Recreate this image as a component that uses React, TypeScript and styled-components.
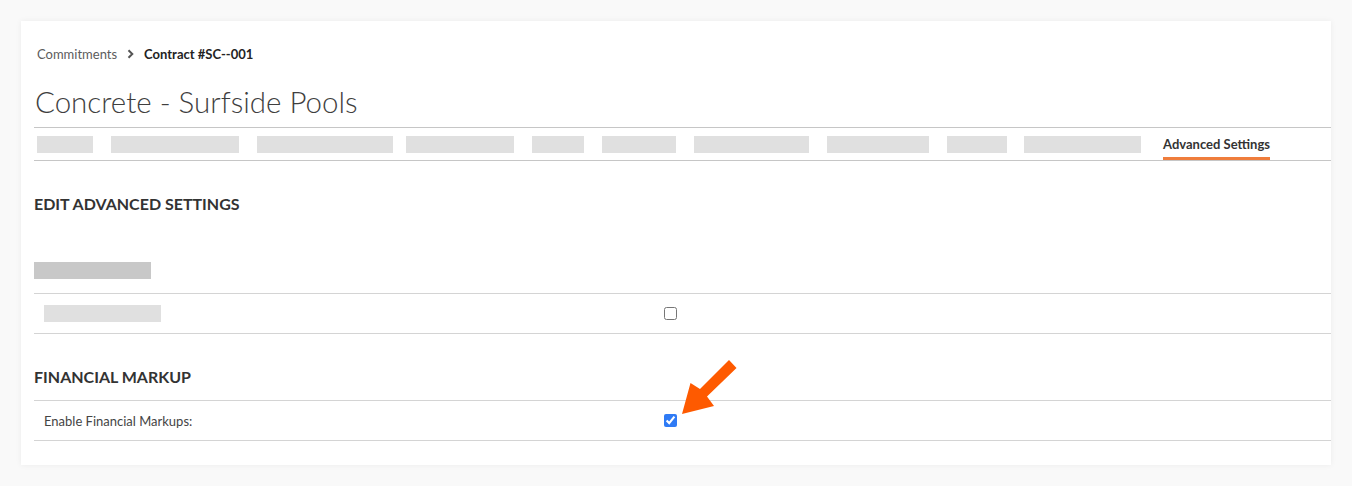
import React from 'react';
import styled, { createGlobalStyle } from 'styled-components';

const GlobalStyle = createGlobalStyle`
    html, body {
        margin: 0;
        padding: 0;
        background: #f9f9f9;
        font-family: Lato, "Open Sans", "Liberation Sans", sans-serif;
    }
    * { box-sizing: border-box; }
`;

const Page = styled.div`
    padding: 21px 21px 21px 21px;
`;

const Card = styled.div`
    position: relative;
    background: #fff;
    box-shadow: 0 0 6px rgba(0, 0, 0, 0.06);
    padding: 23px 0 24px 13px;
`;

const Breadcrumb = styled.div`
    display: flex;
    align-items: center;
    height: 20px;
    padding-left: 3px;
    font-size: 13px;
`;

const Crumb = styled.span<{ current?: boolean }>`
    color: ${(p) => (p.current ? '#232323' : '#5c5c5c')};
    font-weight: ${(p) => (p.current ? 700 : 400)};
`;

const Chevron = styled.svg`
    margin: 0 10px 0 10px;
`;

const Title = styled.h1`
    margin: 18px 0 0 1px;
    height: 40px;
    line-height: 40px;
    font-size: 29.5px;
    font-weight: 300;
    color: #3f3f3f;
`;

const Tabs = styled.nav`
    display: flex;
    align-items: center;
    height: 34px;
    margin-top: 5px;
    padding-left: 3px;
    border-top: 1px solid #c6c6c6;
    border-bottom: 1px solid #c6c6c6;
`;

const TabBlock = styled.div<{ w: number; gap: number }>`
    width: ${(p) => p.w}px;
    height: 17px;
    margin-right: ${(p) => p.gap}px;
    background: #e0e0e0;
`;

const ActiveTab = styled.div`
    height: 32px;
    display: flex;
    align-items: center;
    font-size: 13px;
    font-weight: 700;
    color: #333;
    box-shadow: inset 0 -3px 0 #ef7d3c;
`;

const SectionTitle = styled.h2<{ top: number }>`
    margin: ${(p) => p.top}px 0 0 0;
    height: 20px;
    line-height: 20px;
    font-size: 16px;
    font-weight: 700;
    color: #333;
`;

const SubLabel = styled.div`
    width: 117px;
    height: 17px;
    margin-top: 48px;
    background: #c8c8c8;
`;

const Table = styled.div<{ top: number }>`
    margin-top: ${(p) => p.top}px;
    border-top: 1px solid #d4d4d4;
`;

const Row = styled.div`
    display: grid;
    grid-template-columns: 620px 1fr;
    align-items: center;
    height: 40px;
    padding-left: 10px;
    border-bottom: 1px solid #d4d4d4;
`;

const RowLabel = styled.div`
    font-size: 13px;
    color: #444;
`;

const RowBlock = styled.div`
    width: 117px;
    height: 17px;
    background: #e0e0e0;
`;

const Check = styled.input`
    margin: 0;
    width: 13px;
    height: 13px;
    accent-color: #2f7bf5;
`;

const Arrow = styled.svg`
    position: absolute;
    left: 654px;
    top: 334px;
`;

const tabs = [
    { w: 56, gap: 18 },
    { w: 128, gap: 18 },
    { w: 136, gap: 13 },
    { w: 108, gap: 18 },
    { w: 52, gap: 18 },
    { w: 74, gap: 18 },
    { w: 115, gap: 18 },
    { w: 102, gap: 18 },
    { w: 60, gap: 17 },
    { w: 117, gap: 22 },
];

const App = () => {
    return (
        <Page>
            <GlobalStyle />
            <Card>
                <Breadcrumb>
                    <Crumb>Commitments</Crumb>
                    <Chevron width="7" height="10" viewBox="0 0 7 10">
                        <path d="M1.5 1.2 L5.3 5 L1.5 8.8" fill="none" stroke="#555" strokeWidth="2" />
                    </Chevron>
                    <Crumb current>Contract #SC--001</Crumb>
                </Breadcrumb>
                <Title>Concrete - Surfside Pools</Title>
                <Tabs>
                    {tabs.map((t, i) => <TabBlock key={i} w={t.w} gap={t.gap} />)}
                    <ActiveTab>Advanced Settings</ActiveTab>
                </Tabs>

                <SectionTitle top={33}>EDIT ADVANCED SETTINGS</SectionTitle>
                <SubLabel />
                <Table top={14}>
                    <Row>
                        <RowBlock />
                        <div><Check type="checkbox" readOnly /></div>
                    </Row>
                </Table>

                <SectionTitle top={33}>FINANCIAL MARKUP</SectionTitle>
                <Table top={13}>
                    <Row>
                        <RowLabel>Enable Financial Markups:</RowLabel>
                        <div><Check type="checkbox" checked readOnly /></div>
                    </Row>
                </Table>

                <Arrow width="70" height="70" viewBox="0 0 70 70">
                    <polygon points="7,59 15.5,28 25,34 54,5 61.5,13 32,41.5 39,51" fill="#fe5a00" />
                </Arrow>
            </Card>
        </Page>
    );
};

export default App;
